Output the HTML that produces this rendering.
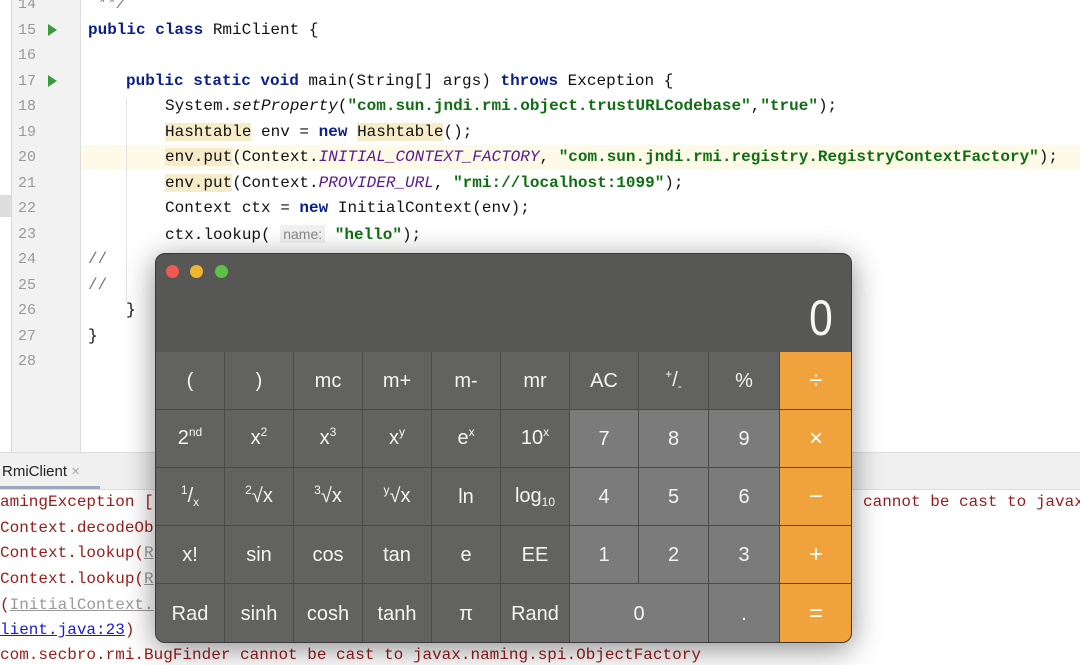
<!DOCTYPE html>
<html><head><meta charset="utf-8"><style>
*{margin:0;padding:0;box-sizing:border-box}
body{width:1080px;height:662px;overflow:hidden;background:#fff;position:relative;font-family:"Liberation Mono",monospace;font-size:16px}
.gut{position:absolute;left:11px;top:0;width:70px;height:452px;background:#f2f2f2;border-left:1px solid #d8d8d8;border-right:1px solid #dcdcdc}
.ln{position:absolute;left:18px;color:#999;font-size:15px}
.code{position:absolute;white-space:pre;color:#111;line-height:20px}
.k{color:#0b1f8a;font-weight:bold}
.s{color:#0f6e12;font-weight:bold}
.i{color:#5b1a8f;font-style:italic}
.h{background:#f6ecca}
.cur{position:absolute;left:11px;top:145px;width:1069px;height:25px;background:#fdfbe8}
.run{position:absolute;left:48px;width:0;height:0;border-left:9px solid #3a9b3a;border-top:6px solid transparent;border-bottom:6px solid transparent}
.tabbar{position:absolute;left:0;top:452px;width:1080px;height:38px;background:#f0f0f0;border-top:1px solid #ddd;border-bottom:1px solid #ddd}
.con{position:absolute;left:0;white-space:pre;color:#9a1b1b;line-height:20px}
.calc{position:absolute;left:155px;top:253px;width:697px;height:390px;border-radius:10px;overflow:hidden;background:#575755;box-shadow:0 6px 30px rgba(0,0,0,.45);border:1px solid #3a3a3a;font-family:"Liberation Sans",sans-serif}
.dot{position:absolute;top:11px;width:13px;height:13px;border-radius:50%}
.disp{position:absolute;right:18px;top:34px;color:#f6f6f6;font-size:50px;font-weight:normal;line-height:60px;transform:scaleX(.85);transform-origin:right}
.b{position:absolute;display:flex;align-items:center;justify-content:center;color:#f4f4f4;font-size:20px;border-right:1px solid #4a4a4a;border-bottom:1px solid #4a4a4a}
.b span{display:inline-block;line-height:24px}
.f{background:#626261}.d{background:#7b7b7b}.o{background:#f0a23c;color:#fff;font-size:24px}
sup{font-size:12px;position:relative;top:-8px;vertical-align:baseline}
sub{font-size:12px;position:relative;top:4px;vertical-align:baseline}
</style></head><body>
<div class="cur"></div>
<div class="gut"></div>
<div style="position:absolute;left:0;top:195px;width:11px;height:22px;background:#ddd"></div>
<div class="ln" style="top:-4px">14</div><div class="ln" style="top:22px">15</div><div class="ln" style="top:47px">16</div><div class="ln" style="top:73px">17</div><div class="ln" style="top:98px">18</div><div class="ln" style="top:124px">19</div><div class="ln" style="top:149px">20</div><div class="ln" style="top:175px">21</div><div class="ln" style="top:200px">22</div><div class="ln" style="top:226px">23</div><div class="ln" style="top:251px">24</div><div class="ln" style="top:277px">25</div><div class="ln" style="top:302px">26</div><div class="ln" style="top:328px">27</div><div class="ln" style="top:353px">28</div>
<div class="run" style="top:24px"></div><div class="run" style="top:75px"></div>
<div style="position:absolute;left:126px;top:98px;width:1px;height:205px;background:#e4e4e4"></div>
<div class="code" style="left:97px;top:-6px;color:#777;font-style:italic">**/</div>
<div class="code" style="left:88px;top:20px"><span class="k">public class</span> RmiClient {</div>
<div class="code" style="left:126px;top:71px"><span class="k">public static void</span> main(String[] args) <span class="k">throws</span> Exception {</div>
<div class="code" style="left:165px;top:96px">System.<i>setProperty</i>(<span class="s">"com.sun.jndi.rmi.object.trustURLCodebase"</span>,<span class="s">"true"</span>);</div>
<div class="code" style="left:165px;top:122px"><span class="h">Hashtable</span> env = <span class="k">new</span> <span class="h">Hashtable</span>();</div>
<div class="code" style="left:165px;top:147px"><span class="h">env.put</span>(Context.<span class="i">INITIAL_CONTEXT_FACTORY</span>, <span class="s">"com.sun.jndi.rmi.registry.RegistryContextFactory"</span>);</div>
<div class="code" style="left:165px;top:173px"><span class="h">env.put</span>(Context.<span class="i">PROVIDER_URL</span>, <span class="s">"rmi://localhost:1099"</span>);</div>
<div class="code" style="left:165px;top:198px">Context ctx = <span class="k">new</span> InitialContext(env);</div>
<div class="code" style="left:165px;top:224px">ctx.lookup( <span style="font-family:'Liberation Sans';font-size:14px;color:#888;background:#f0f0f0;padding:1px 3px">name:</span> <span class="s">"hello"</span>);</div>
<div class="code" style="left:88px;top:249px;color:#777">//</div>
<div class="code" style="left:88px;top:275px;color:#777">//</div>
<div class="code" style="left:126px;top:300px">}</div>
<div class="code" style="left:88px;top:326px">}</div>
<div class="tabbar"><div style="position:absolute;left:0;top:0;height:36px;width:100px;border-bottom:3px solid #9aa8bd;font-family:'Liberation Sans';font-size:15px;padding:10px 2px;color:#222">RmiClient <span style="color:#aaa">×</span></div></div>
<div class="con" style="top:492px">amingException [</div>
<div class="con" style="top:492px;left:863px">cannot be cast to javax</div>
<div class="con" style="top:518px">Context.decodeOb</div>
<div class="con" style="top:543px">Context.lookup(<span style="color:#999;text-decoration:underline">R</span></div>
<div class="con" style="top:569px">Context.lookup(<span style="color:#999;text-decoration:underline">R</span></div>
<div class="con" style="top:595px">(<span style="color:#999;text-decoration:underline">InitialContext.</span></div>
<div class="con" style="top:620px"><span style="color:#1a1ad6;text-decoration:underline">lient.java:23</span>)</div>
<div class="con" style="top:645px">com.secbro.rmi.BugFinder cannot be cast to javax.naming.spi.ObjectFactory</div>
<div class="calc">
<div class="dot" style="left:10px;background:#ee5a52"></div><div class="dot" style="left:34px;background:#f2b52e"></div><div class="dot" style="left:59px;background:#5cc147"></div>
<div class="disp">0</div>
<div id="g"></div>
</div>
<script>
var xs=[0,69,138,207,276,345,414,483,553,624,697],ys=[98,156,214,272,330,390];
var R=[["(","f"],[")","f"],["mc","f"],["m+","f"],["m-","f"],["mr","f"],["AC","f"],["<sup>+</sup>/<sub>-</sub>","f"],["%","f"],["÷","o"],
["2<sup>nd</sup>","f"],["x<sup>2</sup>","f"],["x<sup>3</sup>","f"],["x<sup>y</sup>","f"],["e<sup>x</sup>","f"],["10<sup>x</sup>","f"],["7","d"],["8","d"],["9","d"],["×","o"],
["<sup>1</sup>/<sub>x</sub>","f"],["<sup>2</sup>√x","f"],["<sup>3</sup>√x","f"],["<sup>y</sup>√x","f"],["ln","f"],["log<sub>10</sub>","f"],["4","d"],["5","d"],["6","d"],["−","o"],
["x!","f"],["sin","f"],["cos","f"],["tan","f"],["e","f"],["EE","f"],["1","d"],["2","d"],["3","d"],["+","o"],
["Rad","f"],["sinh","f"],["cosh","f"],["tanh","f"],["π","f"],["Rand","f"],["0","d"],null,[".","d"],["=","o"]];
var h="";for(var r=0;r<5;r++)for(var c=0;c<10;c++){var b=R[r*10+c];if(!b)continue;var w=xs[c+1]-xs[c];if(r==4&&c==6)w=xs[8]-xs[6];
h+='<div class="b '+b[1]+'" style="left:'+xs[c]+'px;top:'+ys[r]+'px;width:'+w+'px;height:'+(ys[r+1]-ys[r])+'px"><span>'+b[0]+'</span></div>';}
document.getElementById("g").innerHTML=h;
</script>
</body></html>
